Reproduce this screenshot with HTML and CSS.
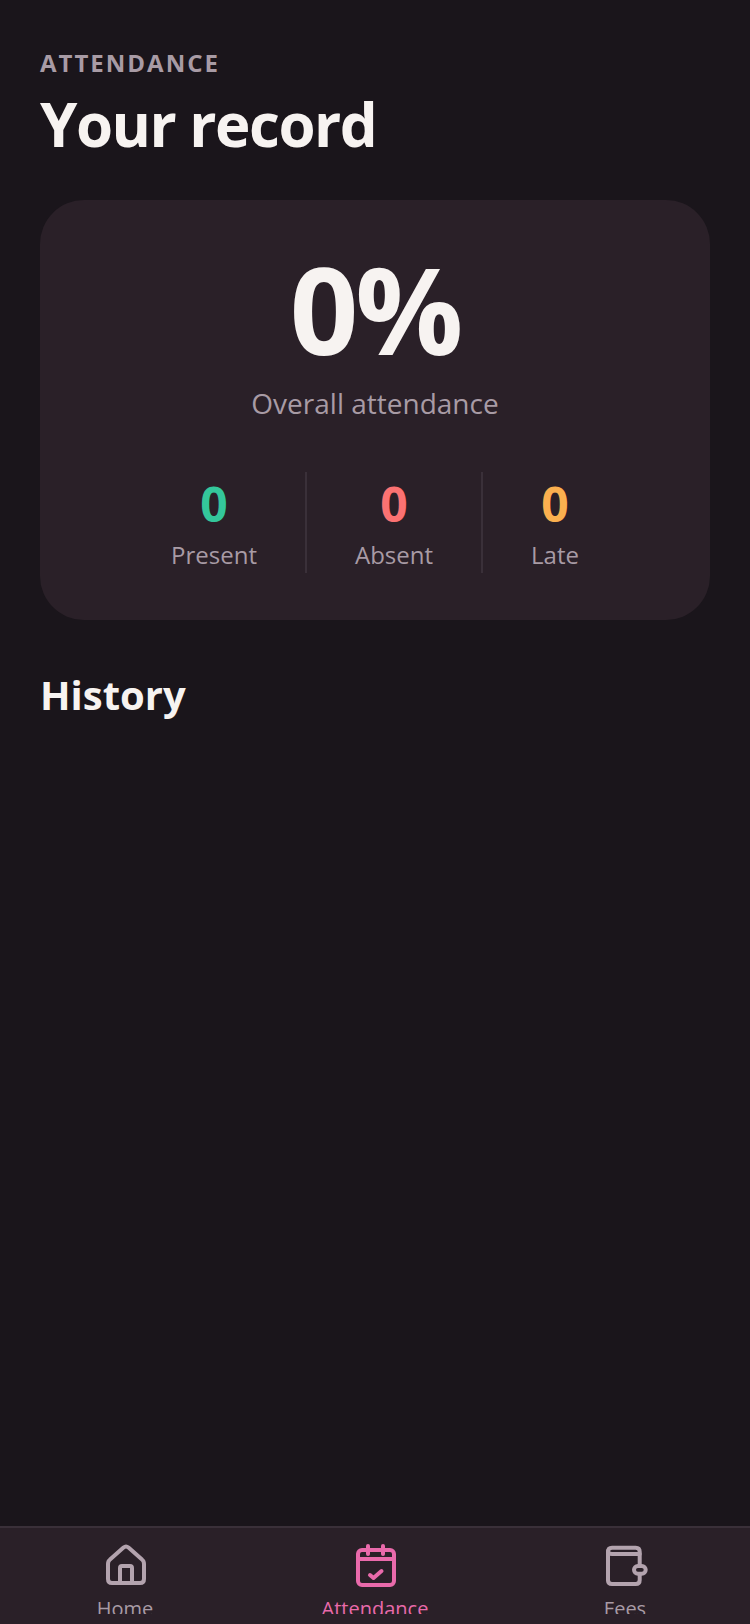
FILE: index.html
```html
<!DOCTYPE html>
<html>
<head>
    <meta charset="UTF-8">
    <title>Attendance</title>
    <link rel="stylesheet" href="styles.css">
</head>
<body>
    <div class="screen">
        <main class="content">
            <div class="eyebrow">ATTENDANCE</div>
            <h1 class="title">Your record</h1>
            <section class="card">
                <div class="percent">0%</div>
                <div class="overall">Overall attendance</div>
                <div class="stats">
                    <div class="stat">
                        <div class="stat-value present">0</div>
                        <div class="stat-label">Present</div>
                    </div>
                    <div class="stat-divider"></div>
                    <div class="stat">
                        <div class="stat-value absent">0</div>
                        <div class="stat-label">Absent</div>
                    </div>
                    <div class="stat-divider"></div>
                    <div class="stat">
                        <div class="stat-value late">0</div>
                        <div class="stat-label">Late</div>
                    </div>
                </div>
            </section>
            <h2 class="section-title">History</h2>
        </main>
        <nav class="tabbar">
            <div class="tab">
                <svg class="tab-icon" viewBox="0 0 48 48" fill="none" stroke="currentColor" stroke-width="4" stroke-linecap="round" stroke-linejoin="round">
                    <path d="M7 22 Q7 19 9 17.5 L22.5 5.5 Q25 3.5 27.5 5.5 L41 17.5 Q43 19 43 22 V37 Q43 41 39 41 H11 Q7 41 7 37 Z"/>
                    <path d="M19 41 V26 Q19 24 21 24 H29 Q31 24 31 26 V41"/>
                </svg>
                <span class="tab-label">Home</span>
            </div>
            <div class="tab active">
                <svg class="tab-icon" viewBox="0 0 48 48" fill="none" stroke="currentColor" stroke-width="4" stroke-linecap="round" stroke-linejoin="round">
                    <rect x="7" y="8" width="36" height="35" rx="4"/>
                    <path d="M7 17 H43"/>
                    <path d="M17 4 V12"/>
                    <path d="M32 4 V12"/>
                    <path d="M19 33 L22.5 36 L30.5 29"/>
                </svg>
                <span class="tab-label">Attendance</span>
            </div>
            <div class="tab">
                <svg class="tab-icon" viewBox="0 0 48 48" fill="none" stroke="currentColor" stroke-width="4" stroke-linecap="round" stroke-linejoin="round">
                    <path d="M7 9 Q7 12 11 12 H38.7"/>
                    <path d="M7 38 V9.7 Q7 5.7 11 5.7 H34.7 Q38.7 5.7 38.7 9.7 V24"/>
                    <path d="M38.7 32 V38 Q38.7 42 34.7 42 H11 Q7 42 7 38"/>
                    <rect x="33" y="24" width="11.7" height="7.7" rx="3.85"/>
                </svg>
                <span class="tab-label">Fees</span>
            </div>
        </nav>
    </div>
</body>
</html>
```

FILE: styles.css
```css
* {
    box-sizing: border-box;
}
html, body {
    margin: 0;
    padding: 0;
}
body {
    background-color: #1a151b;
    font-family: "Open Sans", "Noto Sans", sans-serif;
}
.screen {
    height: 1624px;
    display: flex;
    flex-direction: column;
    overflow: hidden;
}
.content {
    flex: 1;
    padding: 45px 40px 0;
}
.eyebrow {
    color: #a89ba5;
    font-size: 24px;
    font-weight: 700;
    line-height: 36px;
    letter-spacing: 2px;
}
.title {
    color: #f7f3f1;
    font-size: 60px;
    font-weight: 700;
    line-height: 76px;
    letter-spacing: -1.5px;
    margin: 5px 0 0;
}
.card {
    background-color: #2a2028;
    border-radius: 44px;
    height: 420px;
    margin-top: 38px;
    padding-top: 44px;
    display: flex;
    flex-direction: column;
    align-items: center;
}
.percent {
    color: #f7f3f1;
    font-size: 120px;
    font-weight: 700;
    line-height: 130px;
    letter-spacing: -3px;
}
.overall {
    color: #a89ba5;
    font-size: 28px;
    line-height: 40px;
    margin-top: 9px;
}
.stats {
    display: flex;
    align-items: stretch;
    margin-top: 49px;
}
.stat {
    display: flex;
    flex-direction: column;
    align-items: center;
    gap: 1px;
    padding: 0 48px;
}
.stat-value {
    font-size: 48px;
    font-weight: 700;
    line-height: 64px;
}
.present {
    color: #34c79b;
}
.absent {
    color: #fb7272;
}
.late {
    color: #fbb04f;
}
.stat-label {
    color: #a89ba5;
    font-size: 24px;
    line-height: 36px;
}
.stat-divider {
    width: 2px;
    background-color: #3a3039;
}
.section-title {
    color: #f7f3f1;
    font-size: 40px;
    font-weight: 700;
    line-height: 54px;
    margin: 48px 0 0;
}
.tabbar {
    height: 98px;
    background-color: #2a2028;
    border-top: 2px solid #3a3039;
    display: flex;
    justify-content: space-around;
    padding-top: 14px;
}
.tab {
    height: 72px;
    flex: 1;
    display: flex;
    flex-direction: column;
    align-items: center;
    color: #a89ba5;
    overflow: hidden;
}
.tab.active {
    color: #e96aab;
}
.tab-icon {
    width: 48px;
    height: 48px;
    flex-shrink: 0;
    color: #b3a3ae;
}
.tab.active .tab-icon {
    color: #e96aab;
}
.tab-label {
    font-size: 20px;
    line-height: 28px;
    margin-top: 5px;
}
```
